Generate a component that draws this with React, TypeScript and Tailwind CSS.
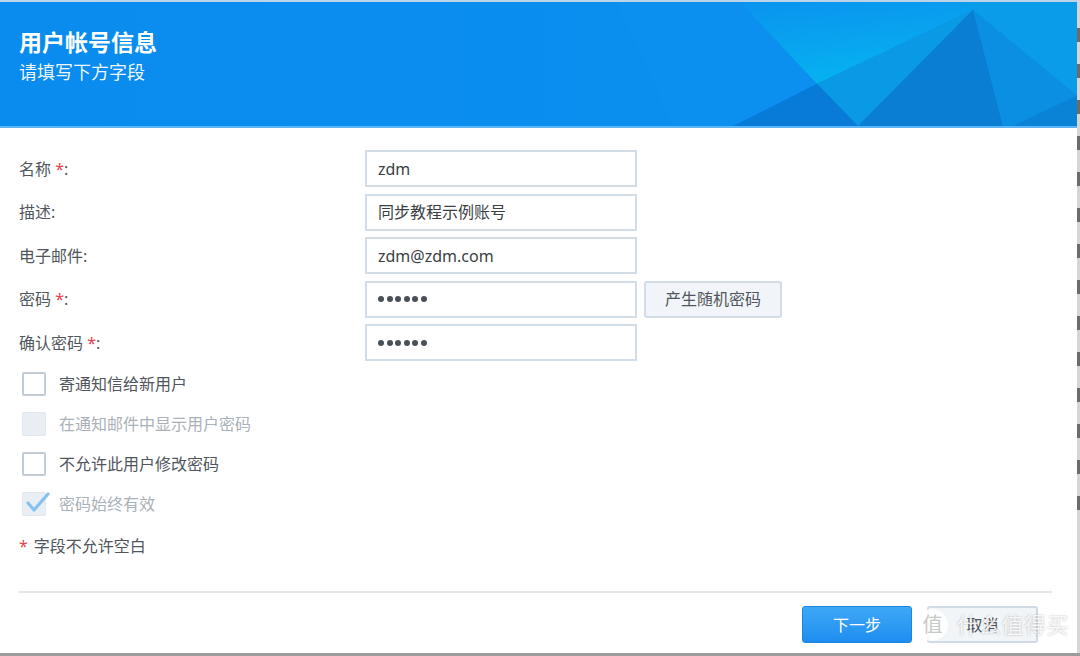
import React from 'react'

const FONT = { fontFamily: '"Noto Sans", "Noto Sans CJK SC", sans-serif' }

// ─── Header facets ─────────────────────────────────────────────────────────────

function HeaderArt() {
  return (
    <svg
      className="absolute inset-0 h-full w-full"
      viewBox="0 0 1077 126"
      preserveAspectRatio="none"
      aria-hidden="true"
    >
      <defs>
        <linearGradient id="glow" x1="0" y1="0" x2="0.3" y2="1">
          <stop offset="0" stopColor="#0a93ef" />
          <stop offset="1" stopColor="#06b2f0" />
        </linearGradient>
        <linearGradient id="base" x1="0" y1="0" x2="1" y2="0">
          <stop offset="0" stopColor="#0a8cee" />
          <stop offset="1" stopColor="#0a90ef" />
        </linearGradient>
      </defs>
      <rect width="1077" height="126" fill="url(#base)" />
      <polygon points="617,0 740,0 817,83 733,126 673,126" fill="#0b90f0" />
      <polygon points="740,0 950,0 973,8 817,83" fill="url(#glow)" />
      <polygon points="817,83 973,8 858,126" fill="#0a99e4" />
      <polygon points="733,126 817,83 858,126" fill="#087bd8" />
      <polygon points="973,8 858,126 1003,126" fill="#0a7ed2" />
      <polygon points="973,8 1003,126 1013,126 1077,95" fill="#0a8fe2" />
      <polygon points="1013,126 1077,95 1077,126" fill="#0a82d6" />
      <polygon points="950,0 1077,0 1077,95 973,8" fill="#0a9be9" />
    </svg>
  )
}

// ─── Form pieces ───────────────────────────────────────────────────────────────

function Star() {
  return <span className="text-[#e8434c]">*</span>
}

function Field({ children }: { children: React.ReactNode }) {
  return (
    <div className="flex h-[37px] w-[272px] items-center border-2 border-[#d3dde7] bg-white px-[11px] text-[16px] text-[#3b3f44]">
      {children}
    </div>
  )
}

function Dots() {
  return (
    <div className="flex items-center gap-[2.6px]">
      {[0, 1, 2, 3, 4, 5].map((i) => (
        <span key={i} className="h-[6px] w-[6px] rounded-full bg-[#4a5058]" />
      ))}
    </div>
  )
}

function Row({ label, children }: { label: React.ReactNode; children: React.ReactNode }) {
  return (
    <div className="flex h-[37px] items-center">
      <div className="w-[346px] text-[16px] text-[#50565c]">{label}</div>
      {children}
    </div>
  )
}

function Check({
  label,
  disabled = false,
  checked = false,
}: {
  label: string
  disabled?: boolean
  checked?: boolean
}) {
  return (
    <div className="flex h-[24px] items-center">
      <div
        className={
          disabled
            ? 'relative ml-[3px] h-[24px] w-[24px] rounded-[2px] border border-[#e1e8ef] bg-[#e8eef4]'
            : 'relative ml-[3px] h-[24px] w-[24px] rounded-[2px] border-2 border-[#c3ccd5] bg-white'
        }
      >
        {checked && (
          <svg className="absolute -top-[3px] left-[2px] h-[24px] w-[26px]" viewBox="0 0 26 24" aria-hidden="true">
            <path d="M3 13l6 7L23 4" fill="none" stroke="#86c2ee" strokeWidth={3.2} strokeLinecap="round" strokeLinejoin="round" />
          </svg>
        )}
      </div>
      <span className={disabled ? 'ml-[13px] text-[16px] text-[#a9b1b9]' : 'ml-[13px] text-[16px] text-[#50565c]'}>
        {label}
      </span>
    </div>
  )
}

// ─── Page ──────────────────────────────────────────────────────────────────────

export default function App() {
  return (
    <div className="flex h-[656px] w-[1080px] flex-col overflow-hidden bg-[#9c9c9c]" style={FONT}>
      <div className="flex h-[653px]">
        <div className="flex w-[1077px] flex-col bg-white">
          <div className="h-[2px] bg-[#bcd4ea]" />

          {/* Header */}
          <div className="relative h-[126px] border-b-2 border-[#5cb6f5]">
            <HeaderArt />
            <div className="relative pl-[19px] pt-[24px] text-white">
              <div className="text-[23px] font-bold leading-[32px]">用户帐号信息</div>
              <div className="mt-[1px] text-[18px] leading-[26px] text-white/95">请填写下方字段</div>
            </div>
          </div>

          {/* Form */}
          <div className="flex flex-col gap-[6.5px] pl-[19px] pt-[22px]">
            <Row label={<>名称 <Star />:</>}>
              <Field>zdm</Field>
            </Row>
            <Row label="描述:">
              <Field>同步教程示例账号</Field>
            </Row>
            <Row label="电子邮件:">
              <Field>zdm@zdm.com</Field>
            </Row>
            <Row label={<>密码 <Star />:</>}>
              <Field>
                <Dots />
              </Field>
              <button className="ml-[7px] h-[37px] w-[138px] rounded-[3px] border-2 border-[#d3dde7] bg-[#f1f5f9] text-[16px] text-[#50565c]">
                产生随机密码
              </button>
            </Row>
            <Row label={<>确认密码 <Star />:</>}>
              <Field>
                <Dots />
              </Field>
            </Row>
          </div>

          <div className="flex flex-col gap-[16px] pl-[19px] pt-[11px]">
            <Check label="寄通知信给新用户" />
            <Check label="在通知邮件中显示用户密码" disabled />
            <Check label="不允许此用户修改密码" />
            <Check label="密码始终有效" disabled checked />
          </div>

          <div className="flex items-center pl-[19px] pt-[18px] text-[16px] text-[#50565c]">
            <span className="text-[#e8434c]">*</span>
            <span className="ml-[6px]">字段不允许空白</span>
          </div>

          <div className="ml-[19px] mt-[33px] h-[2px] w-[1033px] bg-[#e4e6e8]" />

          {/* Footer */}
          <div className="relative flex justify-end gap-[15px] pr-[39px] pt-[13px]">
            <button className="h-[37px] w-[110px] rounded-[3px] border border-[#1a86e2] bg-gradient-to-b from-[#3ea8f6] to-[#1d8def] text-[16px] text-white">
              下一步
            </button>
            <button className="h-[37px] w-[111px] rounded-[3px] border-2 border-[#d0dae4] bg-[#f2f5f8] text-[16px] text-[#50565c]">
              取消
            </button>

            {/* watermark */}
            <div className="pointer-events-none absolute right-[8px] top-[15px] flex items-center gap-[8px] text-white/85 [text-shadow:0_0_2px_rgba(0,0,0,0.3)]">
              <div className="flex h-[32px] w-[32px] items-center justify-center rounded-full bg-white/85 text-[20px] text-[#c8c8c8] [text-shadow:none]">
                值
              </div>
              <span className="text-[22px] tracking-[0.5px]">什么值得买</span>
            </div>
          </div>
        </div>

        {/* right edge strip */}
        <div className="flex w-[3px] flex-col gap-[22px] bg-[#d6d6d6] pt-[28px]">
          {Array.from({ length: 14 }).map((_, i) => (
            <div key={i} className="h-[14px] w-[3px] bg-[#6b6b6b]" />
          ))}
        </div>
      </div>
    </div>
  )
}
